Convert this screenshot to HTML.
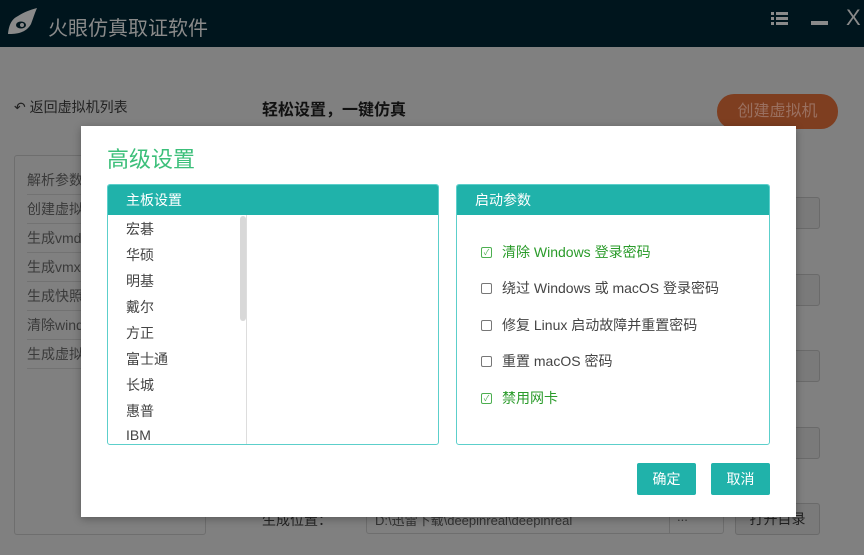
<!DOCTYPE html>
<html><head><meta charset="utf-8"><style>
*{margin:0;padding:0;box-sizing:border-box}
body{width:864px;height:555px;overflow:hidden;background:#808080;font-family:"Liberation Sans","Noto Sans CJK SC",sans-serif;position:relative}
.a{position:absolute}
.tb{left:0;top:0;width:864px;height:47px;background:#00151d}
.bg{color:#2a2a2a}
.sb{left:14px;top:155px;width:192px;height:380px;border:1px solid #6e6e6e;border-radius:3px}
.sbi{position:absolute;left:12px;width:170px;height:29px;border-bottom:1px solid #727272;font-size:14px;color:#3a3a3a;line-height:28px}
.rb{left:735px;width:85px;height:32px;border:1px solid #6a6a6a;border-radius:3px;background:#7a7a7a}
.modal{left:81px;top:126px;width:715px;height:391px;background:#fff;box-shadow:0 2px 8px rgba(0,0,0,.3)}
.panel{position:absolute;top:58px;height:261px;border:1px solid #5ccfcb;border-radius:3px;overflow:hidden}
.ph{height:30px;background:#20b2aa;color:#fff;font-size:14px;line-height:30px;padding-left:18px}
.li{position:absolute;left:18px;font-size:14px;color:#444}
.ck{position:absolute;left:24px;font-size:14px;color:#444;display:flex;align-items:center}
.ck i{display:inline-block;width:11px;height:11px;border:1px solid #777;border-radius:2px;margin-right:10px;font-style:normal;font-size:8px;line-height:9px;text-align:center}
.ck.g{color:#2a9b2a}.ck.g i{border-color:#4caf50;color:#4caf50}
.btn{position:absolute;top:337px;width:59px;height:32px;background:#20b2aa;color:#fff;font-size:14px;line-height:32px;text-align:center;border-radius:2px}
</style></head><body>
<div class="a tb">
<svg class="a" style="left:4px;top:7px" width="34" height="30" viewBox="0 0 34 30"><path d="M33 1C26 3 20 5 14 9 8 12 5 17 4 27 13 27 22 26 27 17 29 12 30 8 33 1Z" fill="#8a8a8a"/><ellipse cx="17" cy="18" rx="5" ry="3.5" fill="#00151d"/><circle cx="18" cy="18" r="2" fill="#8a8a8a"/></svg>
<div class="a" style="left:48px;top:12px;font-size:20px;color:#8a8a8a">火眼仿真取证软件</div>
<div class="a" style="left:771px;top:11px;width:17px;height:16px">
<div class="a" style="left:0;top:1px;width:17px;height:3px;border-left:3px solid #8a8a8a;border-right:12px solid #8a8a8a"></div>
<div class="a" style="left:0;top:6px;width:17px;height:3px;border-left:3px solid #8a8a8a;border-right:12px solid #8a8a8a"></div>
<div class="a" style="left:0;top:11px;width:17px;height:3px;border-left:3px solid #8a8a8a;border-right:12px solid #8a8a8a"></div></div>
<div class="a" style="left:811px;top:21px;width:17px;height:4px;background:#8a8a8a"></div>
<div class="a" style="left:846px;top:5px;font-size:22px;color:#8a8a8a">X</div>
</div>
<div class="a bg" style="left:14px;top:97px;font-size:14px;color:#222">&#8630; 返回虚拟机列表</div>
<div class="a" style="left:262px;top:96px;font-size:16px;font-weight:bold;color:#111">轻松设置，一键仿真</div>
<div class="a" style="left:717px;top:94px;width:121px;height:35px;border-radius:17px;background:#7e3e20;color:#9a7060;font-size:16px;line-height:35px;text-align:center">创建虚拟机</div>
<div class="a sb">
<div class="sbi" style="top:10px">解析参数</div><div class="sbi" style="top:39px">创建虚拟</div><div class="sbi" style="top:68px">生成vmd</div><div class="sbi" style="top:97px">生成vmx</div><div class="sbi" style="top:126px">生成快照</div><div class="sbi" style="top:155px">清除wind</div><div class="sbi" style="top:184px">生成虚拟</div>
</div>
<div class="a rb" style="top:197px"></div><div class="a rb" style="top:274px"></div><div class="a rb" style="top:350px"></div><div class="a rb" style="top:427px"></div>
<div class="a rb" style="top:503px;font-size:14px;color:#222;line-height:30px;text-align:center">打开目录</div>
<div class="a" style="left:262px;top:510px;font-size:14px;color:#222">生成位置：</div>
<div class="a" style="left:366px;top:502px;width:358px;height:32px;border:1px solid #6e6e6e;border-radius:3px;font-size:13px;color:#333;line-height:36px;padding-left:8px">D:\迅雷下载\deepinreal\deepinreal<div class="a" style="left:302px;top:0;width:1px;height:30px;background:#6e6e6e"></div><div class="a" style="left:310px;top:-4px;font-size:13px">...</div></div>
<div class="a modal">
<div class="a" style="left:26px;top:16px;font-size:22px;color:#3cbf7a">高级设置</div>
<div class="panel" style="left:26px;width:332px">
<div class="ph">主板设置</div>
<div class="a" style="left:138px;top:30px;width:1px;height:230px;background:#ddd"></div>
<div class="a" style="left:132px;top:31px;width:6px;height:105px;background:#d8d8d8;border-radius:3px"></div>
<div class="li" style="top:34px">宏碁</div><div class="li" style="top:60px">华硕</div><div class="li" style="top:86px">明基</div><div class="li" style="top:112px">戴尔</div><div class="li" style="top:138px">方正</div><div class="li" style="top:164px">富士通</div><div class="li" style="top:190px">长城</div><div class="li" style="top:216px">惠普</div><div class="li" style="top:242px">IBM</div>
</div>
<div class="panel" style="left:375px;width:314px">
<div class="ph">启动参数</div>
<div class="ck g" style="top:57px"><i>✓</i>清除 Windows 登录密码</div>
<div class="ck" style="top:93px"><i></i>绕过 Windows 或 macOS 登录密码</div>
<div class="ck" style="top:130px"><i></i>修复 Linux 启动故障并重置密码</div>
<div class="ck" style="top:166px"><i></i>重置 macOS 密码</div>
<div class="ck g" style="top:203px"><i>✓</i>禁用网卡</div>
</div>
<div class="btn" style="left:556px">确定</div>
<div class="btn" style="left:630px">取消</div>
</div>
</body></html>
